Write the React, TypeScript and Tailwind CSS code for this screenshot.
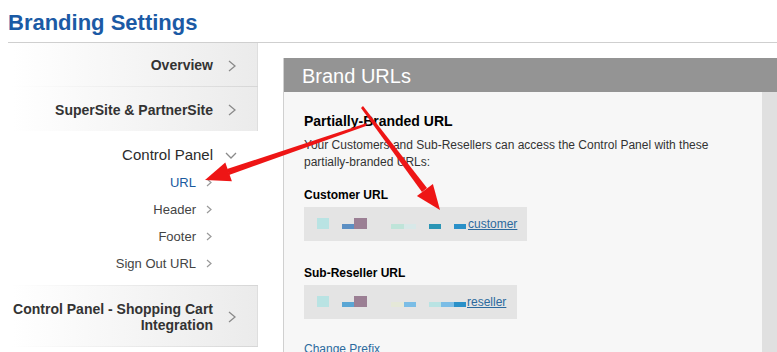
import React from 'react';

const Chevron = ({ className = '' }: { className?: string }) => (
  <svg width="8" height="12" viewBox="0 0 8 12" className={className}>
    <path d="M1 1 L7 6 L1 11" fill="none" stroke="#8a8a8a" strokeWidth="1.3" />
  </svg>
);

const SmallChevron = () => (
  <svg width="6" height="9" viewBox="0 0 6 9">
    <path d="M1 1 L5 4.5 L1 8" fill="none" stroke="#999" strokeWidth="1.2" />
  </svg>
);

const ChevronDown = () => (
  <svg width="12" height="7" viewBox="0 0 12 7">
    <path d="M1 1 L6 6 L11 1" fill="none" stroke="#8a8a8a" strokeWidth="1.3" />
  </svg>
);

const Divider = () => <div className="h-px bg-linear-to-r from-white from-[4%] to-[#d6d6d6]" />;

function NavItem({ label, height, two }: { label: React.ReactNode; height: string; two?: boolean }) {
  return (
    <div className={`flex items-center justify-end bg-linear-to-r from-white from-[5%] to-[#ebebeb] pt-[2px] shadow-[inset_-1px_0_0_#dedede] ${height}`}>
      <span className={`text-right text-[14px] font-bold text-[#333] ${two ? 'leading-[16px]' : ''}`}>{label}</span>
      <div className="w-[45px] shrink-0 pl-[15px]">
        <Chevron />
      </div>
    </div>
  );
}

function SubItem({ label, active }: { label: string; active?: boolean }) {
  return (
    <div className="flex h-[27px] items-center justify-end pt-[2px]">
      <span className={`text-[13px] ${active ? 'text-[#1a5a9e]' : 'text-[#444]'}`}>{label}</span>
      <div className="flex w-[62px] shrink-0 pl-[10px]">
        <SmallChevron />
      </div>
    </div>
  );
}

const Block = ({ w, tall, color }: { w: string; tall?: boolean; color: string }) => (
  <div className={`${w} ${tall ? 'h-[11px]' : 'h-[5px]'} ${color}`} />
);

export default function App() {
  return (
    <div className="relative h-[352px] w-[777px] overflow-hidden bg-white font-['Liberation_Sans',Arial,sans-serif]">
      {/* Title */}
      <div className="h-[42px] pl-2 pt-[10px]">
        <h1 className="text-[22px] font-bold leading-[26px] text-[#1b5aa5]">Branding Settings</h1>
      </div>
      <div className="ml-2 h-px bg-[#cfcfcf]" />

      <div className="flex">
        {/* Sidebar */}
        <div className="w-[258px] shrink-0">
          <NavItem label="Overview" height="h-[43px]" />
          <Divider />
          <NavItem label="SuperSite & PartnerSite" height="h-[44px]" />

          <div className="pb-[9px] pt-[10px]">
            <div className="flex h-[27px] items-center justify-end pt-[2px]">
              <span className="text-[15px] text-[#2b2b2b]">Control Panel</span>
              <div className="flex w-[45px] shrink-0 pl-[12px]">
                <ChevronDown />
              </div>
            </div>
            <SubItem label="URL" active />
            <SubItem label="Header" />
            <SubItem label="Footer" />
            <SubItem label="Sign Out URL" />
          </div>

          <Divider />
          <NavItem
            label={<>Control Panel - Shopping Cart<br />Integration</>}
            height="h-[60px]"
            two
          />
          <Divider />
        </div>

        {/* Main panel */}
        <div className="flex-1 pl-[25px] pt-[15px]">
          <div className="border-l border-[#d0d0d0]">
            <div className="flex h-[34px] items-center bg-[#949494] pl-[18px] pt-[1px]">
              <span className="text-[20px] text-white">Brand URLs</span>
            </div>
            <div className="flex">
              <div className="h-[270px] flex-1 bg-[#f7f7f7] pl-[20px] pt-[20px]">
                <h2 className="text-[14px] font-bold leading-[18px] text-black">Partially-Branded URL</h2>
                <p className="mt-[7px] w-[420px] text-[12px] leading-[17px] text-[#333]">
                  Your Customers and Sub-Resellers can access the Control Panel with these partially-branded URLs:
                </p>

                <div className="mt-[16px] text-[12px] font-bold leading-[16px] text-black">Customer URL</div>
                <div className="mt-[4px] flex h-[34px] w-[223px] items-center bg-[#e4e4e4] pl-[13px]">
                  <div className="mb-[2px] flex h-[11px] items-end">
                    <Block w="w-[12px]" tall color="bg-[#b9e3e3]" />
                    <div className="ml-[13px]" />
                    <Block w="w-[12px]" color="bg-[#5b8fc3]" />
                    <Block w="w-[13px]" tall color="bg-[#9b7f94]" />
                    <div className="ml-[24px]" />
                    <Block w="w-[13px]" color="bg-[#bfe4d9]" />
                    <Block w="w-[12px]" color="bg-[#d8e8e8]" />
                    <div className="ml-[13px]" />
                    <Block w="w-[12px]" color="bg-[#2b95b5]" />
                    <div className="ml-[13px]" />
                    <Block w="w-[12px]" color="bg-[#2a90c8]" />
                  </div>
                  <a className="ml-[2px] text-[12px] text-[#2c6a9e] underline">customer</a>
                </div>

                <div className="mt-[24px] text-[12px] font-bold leading-[16px] text-black">Sub-Reseller URL</div>
                <div className="mt-[4px] flex h-[34px] w-[213px] items-center bg-[#e4e4e4] pl-[13px]">
                  <div className="mb-[2px] flex h-[11px] items-end">
                    <Block w="w-[12px]" tall color="bg-[#b9e3e3]" />
                    <div className="ml-[13px]" />
                    <Block w="w-[12px]" color="bg-[#5aa6d4]" />
                    <Block w="w-[13px]" tall color="bg-[#9b7f94]" />
                    <div className="ml-[24px]" />
                    <Block w="w-[13px]" color="bg-[#e5e8d8]" />
                    <Block w="w-[12px]" color="bg-[#7bbde6]" />
                    <div className="ml-[13px]" />
                    <Block w="w-[12px]" color="bg-[#b9e3e3]" />
                    <Block w="w-[13px]" color="bg-[#7bbde6]" />
                    <Block w="w-[12px]" color="bg-[#2a90c8]" />
                  </div>
                  <a className="ml-[1px] text-[12px] text-[#2c6a9e] underline">reseller</a>
                </div>

                <a className="mt-[22px] block text-[12px] leading-[16px] text-[#2c6a9e]">Change Prefix</a>
              </div>
              <div className="w-[15px] shrink-0 bg-[#e0e0e0]" />
            </div>
          </div>
        </div>
      </div>

      {/* Red annotation arrows */}
      <svg className="pointer-events-none absolute left-0 top-0" width="777" height="352">
        <polygon points="367,123 366,126 229,175 227,169" fill="#ee1515" />
        <polygon points="205,180 225.3,162.4 231.9,181.2" fill="#ee1515" />
        <polygon points="361,108 363,106 427,188 422,192" fill="#ee1515" />
        <polygon points="440,210 416.9,196.1 432.9,184.1" fill="#ee1515" />
      </svg>
    </div>
  );
}
